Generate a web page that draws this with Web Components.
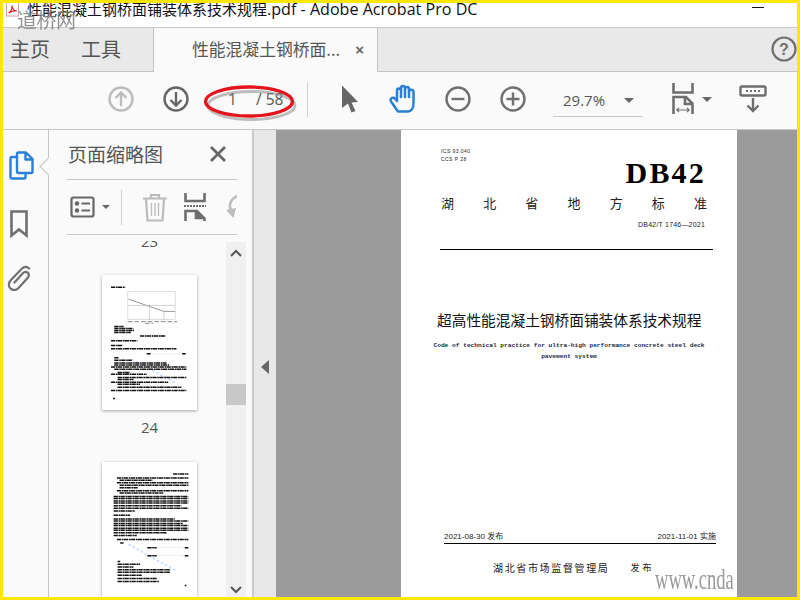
<!DOCTYPE html>
<html lang="zh"><head><meta charset="utf-8"><title>Acrobat</title>
<style>html,body{margin:0;padding:0;background:#ffe600}</style></head>
<body>
<app-window>
  <title-bar></title-bar>
  <tab-bar></tab-bar>
  <tool-bar></tool-bar>
  <work-area></work-area>
</app-window>
<script>
const UI='"Open Sans","Noto Sans CJK SC",sans-serif';
const CJK='"Noto Sans CJK SC","Liberation Sans",sans-serif';
function def(name,css,html){
  customElements.define(name,class extends HTMLElement{
    connectedCallback(){ if(this.shadowRoot) return;
      const r=this.attachShadow({mode:'open'});
      const h=typeof html==='function'?html(this):html;
      r.innerHTML=`<style>${css}</style>${h}`; }
  });
}
def('app-window',`
:host{display:flex;flex-direction:column;position:relative;box-sizing:border-box;width:800px;height:600px;overflow:hidden;
 border:solid #ffe600;border-width:3px 3px 3px 3px;background:#fff;font-family:${UI}}
.wm{position:absolute;left:14px;top:3px;font:400 20px/28px "Noto Sans CJK SC",serif;letter-spacing:-.5px;color:#808080;opacity:.85;pointer-events:none;white-space:nowrap;z-index:2}
`,`<slot></slot><div class="wm">道桥网</div>`);

def('title-bar',`
:host{display:flex;align-items:flex-start;box-sizing:border-box;border-bottom:1px solid #c8c8c8;background:#fff;overflow:hidden;flex:none;height:25px}
svg{flex:none;margin:0 0 0 3px}
.t{margin:-1px 0 0 7px;font:15px/14px ${UI};color:#111;white-space:nowrap;flex:none}
.t b{font-weight:400;font-size:16.100px}
.s{flex:1}
.m{width:12px;height:1px;background:#111;margin:4px 33px 0 0;flex:none}
`,`<svg width="14" height="14" viewBox="0 0 14 14"><rect x=".5" y="-3" width="12" height="16" fill="#fff" stroke="#d9a0a0"/><path d="M2.500 10C5 8.500 6.500 5 6 2.500 6.500 6 8 8 11 8 8 7.500 5 8.500 2.500 10Z" fill="none" stroke="#d8262c" stroke-width="1.200"/></svg><span class="t">性能混凝土钢桥面铺装体系技术规程<b>.pdf - Adobe Acrobat Pro DC</b></span><span class="s"></span><span class="m"></span>`);

def('tab-bar',`
:host{display:flex;align-items:stretch;height:44px;box-sizing:border-box;border-bottom:1px solid #c4c4c4;background:#e9e9e9;flex:none;color:#555;font-family:${CJK}}
.nav{width:150px;flex:none;display:flex;align-items:center;font-size:20px;box-sizing:border-box;padding:0 0 2px 7px;gap:31px}
.tab{width:225px;flex:none;box-sizing:border-box;margin-bottom:-1px;background:#fafafa;border:solid #c4c4c4;border-width:0 1px;display:flex;align-items:center;font-size:16.800px;padding:0 0 2px 38px;position:relative}
.tab i{font:normal 700 15px/1 "Liberation Sans",sans-serif;color:#666;margin-left:15px}
.s{flex:1}
svg{align-self:center;margin:0 0 2px 0}
`,`<div class="nav"><span>主页</span><span>工具</span></div><div class="tab"><span>性能混凝土钢桥面...</span><i>×</i></div><span class="s"></span>
<svg width="26" height="26" viewBox="0 0 26 26"><circle cx="13" cy="13" r="11.500" fill="none" stroke="#707070" stroke-width="2.200"/><text x="13" y="18.500" text-anchor="middle" font-family="Liberation Sans" font-weight="700" font-size="16" fill="#707070">?</text></svg>`);

def('tool-bar',`
:host{display:flex;align-items:center;height:58px;box-sizing:border-box;padding-bottom:3px;border-bottom:1px solid #c8c8c8;background:#fafafa;flex:none;color:#555;position:relative;font:15.500px/20px ${UI}}
svg{flex:none;display:block}
.up{margin-left:105px}.down{margin-left:29px}
.n1{margin-left:39px;width:28px}.n2{width:51px}
.sep{width:1px;height:35px;background:#cfcfcf;flex:none}
.cur{margin-left:33px}.hand{margin-left:30px}.minus{margin-left:28px}.plus{margin-left:29px}
.zoom{margin-left:27px;width:90px;height:34px;box-sizing:border-box;border-bottom:1px solid #c8c8c8;display:flex;align-items:center;padding:1px 0 0 10px;position:relative;top:1px;font-size:15px}
.zoom b{font-weight:400;width:61px}
.car{width:0;height:0;border:solid transparent;border-width:5px 5px 0;border-top-color:#666;flex:none}
.fit{margin-left:29px}.c2{margin-left:8px}.dl{margin-left:27px}
.ring{position:absolute;left:199px;top:12px;pointer-events:none;overflow:visible}
`,`<svg class="up" width="26" height="26" viewBox="0 0 26 26" fill="none" stroke="#bcbcbc" stroke-width="2.400"><circle cx="13" cy="13" r="11.500"/><path d="M13 20V6.500M7.500 12 13 6.500 18.500 12"/></svg>
<svg class="down" width="26" height="26" viewBox="0 0 26 26" fill="none" stroke="#666" stroke-width="2.400"><circle cx="13" cy="13" r="11.500"/><path d="M13 6V19.500M7.500 14 13 19.500 18.500 14"/></svg>
<span class="n1">1</span><span class="n2">/ 58</span><span class="sep"></span>
<svg class="cur" width="18" height="28" viewBox="0 0 18 28"><path d="M1 0.500 17 17 10.500 17.500 14.500 26 10.500 27.500 7 18.500 1 23Z" fill="#666"/></svg>
<svg class="hand" width="28" height="30" viewBox="0 0 28 30" fill="none" stroke="#2b7fd4" stroke-width="2.500" stroke-linejoin="round" stroke-linecap="round"><path d="M9 27.500C6.500 24.500 4.500 20.500 2 17.500 .5 15 3.500 12.500 6 14.500L8 17V6.500a2 2 0 0 1 4 0V4a2 2 0 0 1 4 0V5a2 2 0 0 1 4 0V8a2 2 0 0 1 4.500 0V19C24.500 24 22.500 27.500 19 27.500Z"/><path d="M12 6V13M16 5V13M20 8V13"/></svg>
<svg class="minus" width="26" height="26" viewBox="0 0 26 26" fill="none" stroke="#707070" stroke-width="2.400"><circle cx="13" cy="13" r="11.500"/><path d="M6.500 13H19.500"/></svg>
<svg class="plus" width="26" height="26" viewBox="0 0 26 26" fill="none" stroke="#707070" stroke-width="2.400"><circle cx="13" cy="13" r="11.500"/><path d="M6.500 13H19.500M13 6.500V19.500"/></svg>
<div class="zoom"><b>29.7%</b><span class="car"></span></div>
<svg class="fit" width="22" height="32" viewBox="0 0 22 32" fill="none" stroke="#6e6e6e" stroke-width="2.600"><path d="M1.500 0V9.500H20.500V0"/><path d="M1.500 31V14H14L20.500 20.500V31"/><path d="M13 14V21H20.500"/><path d="M5 27H17M7 24.800 4.800 27 7 29.200M15 24.800 17.200 27 15 29.200" stroke-width="1.200"/></svg>
<span class="car c2"></span>
<svg class="dl" width="28" height="28" viewBox="0 0 28 28" fill="none" stroke="#6e6e6e"><rect x="1.500" y="1.500" width="25" height="9" rx="1.500" stroke-width="2.400"/><path d="M7 6H21" stroke-width="2" stroke-dasharray="2 2"/><path d="M14 13V26M8.500 20.500 14 26 19.500 20.500" stroke-width="2.400"/></svg>
<svg class="ring" width="98" height="40" viewBox="0 0 98 40" fill="none"><ellipse cx="47.500" cy="19.500" rx="43.500" ry="14" stroke="#8a8a8a" stroke-width="3" opacity=".55" transform="translate(2 2)"/><ellipse cx="47" cy="17.500" rx="43.500" ry="14.500" stroke="#e3141c" stroke-width="3.400"/></svg>`);

def('work-area',`:host{display:flex;flex:1;min-height:0;overflow:hidden}`,
`<side-rail></side-rail><thumb-panel></thumb-panel><fold-gutter></fold-gutter><doc-view></doc-view>`);

def('side-rail',`
:host{display:flex;flex-direction:column;align-items:center;width:46px;flex:none;box-sizing:border-box;background:#fafafa;border-right:1px solid #c4c4c4;position:relative;padding:21px 13px 0 0}
svg{display:block;flex:none}
.p{margin-left:4px}.b{margin-top:30px}.c{margin-top:27px}
.notch{position:absolute;right:-7px;top:30px;width:13px;height:13px;box-sizing:border-box;background:#fafafa;border:solid #c4c4c4;border-width:0 0 1px 1px;transform:rotate(45deg)}
`,`<svg class="p" width="25" height="29" viewBox="0 0 25 29" fill="none" stroke="#2b7fd4" stroke-width="2.400" stroke-linejoin="round"><path d="M8 6H3a1.500 1.500 0 0 0-1.500 1.500V26a1.500 1.500 0 0 0 1.500 1.500H15A1.500 1.500 0 0 0 16.500 26V22"/><path d="M8 3a1.500 1.500 0 0 1 1.500-1.500H17L23.500 8V20.500A1.500 1.500 0 0 1 22 22H9.500A1.500 1.500 0 0 1 8 20.500Z"/><path d="M16.500 1.500V8.500H23.500"/></svg>
<svg class="b" width="18" height="28" viewBox="0 0 18 28" fill="none" stroke="#707070" stroke-width="2.600"><path d="M1.500 1.500H16.500V25.500L9 19.500 1.500 25.500Z"/></svg>
<svg class="c" width="25" height="26" viewBox="0 0 25 26" fill="none" stroke="#707070" stroke-width="2.200" stroke-linecap="round"><path d="M22 3.500C20 1 17 1.500 15 3.500L3.500 15.500C1 18.500 1.500 22 4 24 6.500 25.500 9.500 25 11.500 23L21 12.500C22.500 10.500 22 8.500 20.500 7.500 19 6.500 17 7 16 8L7.500 17.500"/></svg>
<span class="notch"></span>`);

def('thumb-panel',`
:host{display:flex;flex-direction:column;width:205px;flex:none;box-sizing:border-box;background:#fafafa;border-right:2px solid #cacaca;overflow:hidden}
.head{display:flex;align-items:center;height:50px;box-sizing:border-box;margin:0 15px 0 18px;padding:0 11px 2px 1px;border-bottom:1px solid #c8c8c8;justify-content:space-between;font:19px/24px ${CJK};color:#555;flex:none}
.bar{display:flex;align-items:center;height:55px;box-sizing:border-box;margin:0 15px 0 18px;border-bottom:1px solid #c8c8c8;flex:none;overflow:hidden;padding-left:3px}
svg{display:block;flex:none}
.car{width:0;height:0;border:solid transparent;border-width:4px 4px 0;border-top-color:#666;margin-left:7px;flex:none}
.sep{width:1px;height:35px;background:#cfcfcf;margin-left:11px;flex:none}
.tr{margin-left:20px}.sp{margin-left:16px}.ro{margin-left:19px}
.body{display:flex;flex:1;min-height:0;padding-top:6px}
.list{flex:none;overflow:hidden;display:flex;flex-direction:column;align-items:center;font:15px/20px ${UI};color:#555;padding-left:24px;width:177px;box-sizing:border-box}
.lab{flex:none;height:20px}
.sb{width:20px;flex:none;margin-top:1px;background:#f0f0f0;display:flex;flex-direction:column;align-items:center;margin-right:7px;box-sizing:border-box}
.sb .th{width:20px;height:21px;background:#c8c8c8;margin-top:127px;flex:none}
.sb .g{flex:1}
.sb svg{margin-top:7px}
.sb svg.d{margin:0 0 3px}
`,`<div class="head"><span>页面缩略图</span><svg width="16" height="16" viewBox="0 0 16 16" stroke="#666" stroke-width="2.800"><path d="M1 1 15 15M15 1 1 15"/></svg></div>
<div class="bar">
<svg width="25" height="22" viewBox="0 0 25 22" fill="none" stroke="#666" stroke-width="2.200"><rect x="1.500" y="1.500" width="22" height="19" rx="2"/><circle cx="7" cy="7.500" r="2.200" fill="#666" stroke="none"/><circle cx="7" cy="14.500" r="2.200" fill="#666" stroke="none"/><path d="M11.500 7.500H20M11.500 14.500H20"/></svg><span class="car"></span><span class="sep"></span>
<svg class="tr" width="26" height="29" viewBox="0 0 26 29" fill="none" stroke="#bcbcbc" stroke-width="2.200"><path d="M1 5.500H25M9 5V2H17V5M4 6 5.500 27.500H20.500L22 6"/><path d="M9.500 10V23M13 10V23M16.500 10V23" stroke-width="1.300"/></svg>
<svg class="sp" width="22" height="28" viewBox="0 0 22 28" fill="none" stroke="#6e6e6e" stroke-width="2.600"><path d="M1.500 0V8H20.500V0"/><path d="M0 13H22" stroke-dasharray="2 1" stroke-width="2"/><path d="M1.500 28V18H13L20.500 25.500V28"/><path d="M12 18V25H20" fill="#6e6e6e"/></svg>
<svg class="ro" width="20" height="28" viewBox="0 0 20 28" fill="none" stroke="#bcbcbc" stroke-width="2.600"><path d="M15 2C5 5 2 13 8 21"/><path d="M1 17 8.500 25 11 15Z" fill="#bcbcbc" stroke="none"/></svg>
</div>
<div class="body"><div class="list">
<span class="lab" style="margin-top:-10.500px">23</span>
<thumb-page style="margin-top:24.500px" kind="a"></thumb-page>
<span class="lab" style="margin-top:6.500px">24</span>
<thumb-page style="margin-top:25px" kind="b"></thumb-page>
</div>
<div class="sb"><svg width="12" height="8" viewBox="0 0 12 8" fill="none" stroke="#555" stroke-width="2"><path d="M1 7 6 2 11 7"/></svg>
<span class="th"></span><span class="g"></span>
<svg class="d" width="12" height="8" viewBox="0 0 12 8" fill="none" stroke="#555" stroke-width="2"><path d="M1 1 6 6 11 1"/></svg></div></div>`);

const L=(a)=>a.map(([x1,x2,y])=>`M${x1} ${y}H${x2}`).join('');
const A_TXT=[[62,105,67],[72,100,186],[72,130,192],[72,132,198],[72,122,204],[150,228,214],[62,142,229],[62,97,243],[62,260,253],[170,182,268],[277,288,268],[72,86,280],[72,125,288],[72,230,296],[72,238,302],[62,290,308],[72,290,315],[82,120,325],[62,170,330],[82,168,340],[82,290,340],[82,130,346],[62,235,354],[82,150,360],[82,275,369],[62,290,379],[68,74,403]];
const B_TXT=[[250,296,102],[80,296,114],[88,188,121],[80,296,129],[88,296,136],[88,145,144],[80,296,153],[88,220,160],[70,296,170],[70,296,176],[70,296,184],[70,296,190],[70,275,198],[70,296,206],[70,135,214],[70,120,227],[70,255,238],[70,296,244],[70,280,252],[70,296,258],[70,296,266],[70,296,272],[70,230,280],[70,140,288],[80,296,300],[90,100,311],[172,200,325],[285,296,325],[172,200,349],[285,296,349],[82,90,367],[82,150,375],[82,130,383],[82,240,392],[82,240,399],[82,155,408],[82,200,418],[82,208,427],[285,290,439]];
def('thumb-page',`
:host{display:block;flex:none;width:95px;height:135px;background:#fff;box-shadow:0 1px 3px rgba(0,0,0,.35)}
svg{display:block;filter:blur(.35px)}
`,el=>{
 const a=el.getAttribute('kind')==='a';
 const vb=a?'35 30 287 408':'35 66 287 408';
 const t=a?A_TXT:B_TXT;
 const chart=a?`<rect x="113" y="80" width="143" height="85" fill="none" stroke="#ccc" stroke-width="2"/><path d="M115 103 222 140H256" fill="none" stroke="#999" stroke-width="3"/><path d="M113 122H256M178 118V165M222 140V165" stroke="#bbb" stroke-width="2"/><path d="M113 171H262M165 176H190" stroke="#888" stroke-width="3" stroke-dasharray="14 6"/><path d="M188 268H275" stroke="#bbb" stroke-width="2" stroke-dasharray="3 5"/><path d="M125 285 255 355" stroke="#cfe0fa" stroke-width="6" stroke-dasharray="8 6"/>`
   :`<path d="M200 325H285M200 349H285" stroke="#bbb" stroke-width="2" stroke-dasharray="3 5"/><path d="M115 315 260 395" stroke="#cfe0fa" stroke-width="6" stroke-dasharray="8 6"/>`;
 return `<svg width="95" height="135" viewBox="${vb}">${chart}<path d="${L(t)}" fill="none" stroke="#111" stroke-width="4.500" stroke-dasharray="13 2 5 1"/></svg>`;
});

def('fold-gutter',`
:host{display:flex;align-items:center;justify-content:center;width:22px;flex:none;background:#e8e8e8;box-sizing:border-box}
i{display:block;width:0;height:0;border:solid transparent;border-width:7px 8px 7px 0;border-right-color:#666;margin-top:7px}
`,`<i></i>`);

def('doc-view',`
:host{display:block;flex:1;background:#9b9b9b;overflow:hidden;padding-left:125px}
`,`<doc-page></doc-page>`);

def('doc-page',`
:host{display:block;position:relative;box-sizing:border-box;width:336px;height:467px;background:#fff;overflow:hidden;padding:17px 24px 0 40px;color:#000;font-family:${CJK}}
.ics{font:5px/8px "Liberation Sans",sans-serif;color:#222;letter-spacing:.45px}
.db{font:700 30px/30px "Liberation Serif",serif;text-align:right;margin:-5px 7px 0 0;letter-spacing:2.200px}
.pr{display:flex;justify-content:space-between;width:266px;font-size:13px;line-height:16px;margin-top:7px;color:#222}
.code{font:7px/10px "Liberation Sans",sans-serif;text-align:right;margin:9px 8px 0 0;color:#222;letter-spacing:.2px}
.rule{height:1.400px;background:#000;margin:19px 0 0 -1px}
.ti{font-size:14.700px;line-height:20px;margin:60px 0 0 -4px;white-space:nowrap;color:#111}
.en{font:6.200px/11px "Liberation Mono",monospace;text-align:center;margin:10px 8px 0 -8px;white-space:nowrap;color:#1a2a44;font-weight:700}
.dates{display:flex;justify-content:space-between;font:8px/10px "Liberation Sans","Noto Sans CJK SC",sans-serif;margin:170px -3px 0 3px;border-bottom:1.400px solid #000;height:11px;box-sizing:content-box;color:#222}
.issuer{display:flex;font-size:10px;line-height:14px;margin:17px 0 0 52px;letter-spacing:1.650px;color:#222;white-space:nowrap}
.issuer b{font-weight:400;font-size:9px;letter-spacing:3px;margin-left:21px}
.wm{position:absolute;left:254px;top:434px;font:400 30px/30px "Liberation Serif",serif;color:#999;transform:scaleX(.62);transform-origin:0 0;white-space:nowrap}
`,`<div class="ics">ICS 93.040<br>CCS P 28</div>
<div class="db">DB42</div>
<div class="pr"><span>湖</span><span>北</span><span>省</span><span>地</span><span>方</span><span>标</span><span>准</span></div>
<div class="code">DB42/T 1746—2021</div>
<div class="rule"></div>
<div class="ti">超高性能混凝土钢桥面铺装体系技术规程</div>
<div class="en">Code of technical practice for ultra-high performance concrete steel deck<br>pavement system</div>
<div class="dates"><span>2021-08-30 发布</span><span>2021-11-01 实施</span></div>
<div class="issuer"><span>湖北省市场监督管理局</span><b>发布</b></div>
<div class="wm">www.cnda</div>`);
</script>
</body></html>
